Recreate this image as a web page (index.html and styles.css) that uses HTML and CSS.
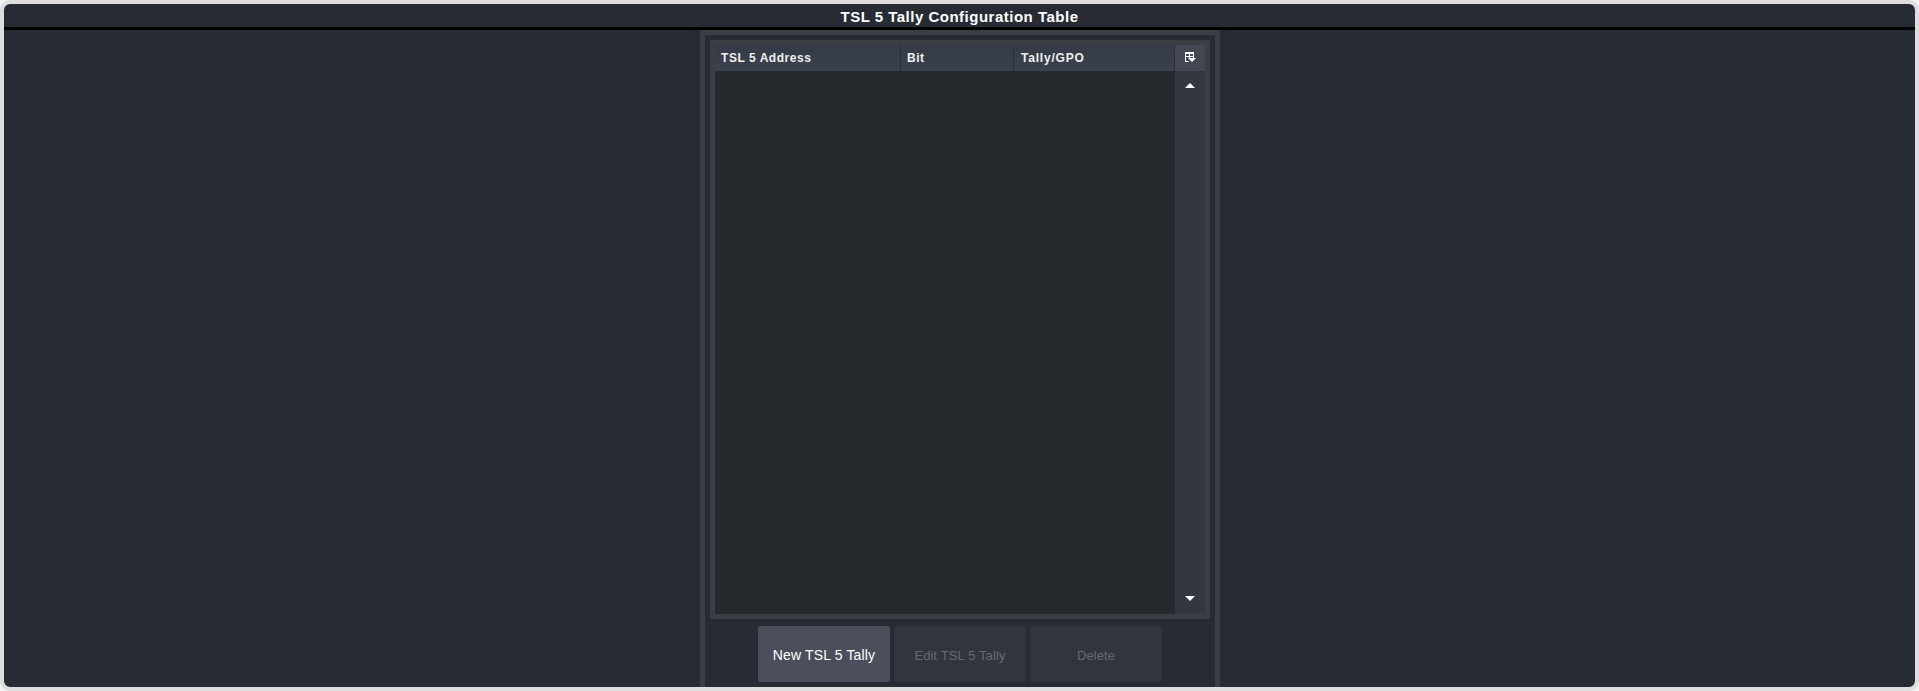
FILE: index.html
```html
<!DOCTYPE html>
<html lang="en">
<head>
  <meta charset="UTF-8">
  <title>TSL 5 Tally Configuration Table</title>
  <link rel="stylesheet" href="styles.css">
</head>
<body>
  <div class="frame">
    <header class="title">TSL 5 Tally Configuration Table</header>
    <main class="content">
      <section class="panel">
        <div class="table-box">
          <div class="table-head">
            <div class="col col-addr">TSL 5 Address</div>
            <div class="col col-bit">Bit</div>
            <div class="col col-tally">Tally/GPO</div>
            <div class="corner">
              <svg width="12" height="10" viewBox="0 0 12 10">
                <path d="M1.5 1h8M9.5 1v5M1.5 .5v9h3M1.5 4.5h8M5.5 1v5" fill="none" stroke="#fff" stroke-width="1"/>
                <path d="M1 0h9v2h-9z" fill="#fff"/>
                <path d="M4 6h8l-4 4z" fill="#fff"/>
              </svg>
            </div>
          </div>
          <div class="table-main">
            <div class="rows"></div>
            <div class="scrollbar">
              <span class="arrow arrow-up"></span>
              <span class="arrow arrow-down"></span>
            </div>
          </div>
        </div>
        <div class="actions">
          <button class="btn">New TSL 5 Tally</button>
          <button class="btn" disabled>Edit TSL 5 Tally</button>
          <button class="btn" disabled>Delete</button>
        </div>
      </section>
    </main>
  </div>
</body>
</html>
```

FILE: styles.css
```css
:root {
  --bg: #272c34;
  --line: #3b3f44;
  --body: #26292e;
  --head: #383f4a;
  --scroll: #33373f;
}
* {box-sizing:border-box;}
html, body {margin:0; height:100%; background:#f2f2f2;}
body {font-family:"Liberation Sans", Arial, sans-serif; color:#fff; overflow:hidden;}

.frame {
  height:691px; display:flex; flex-direction:column;
  background:var(--bg);
  border:4px solid #dedede; border-radius:10px;
  overflow:hidden;
}
.title {
  height:26px; flex:none;
  border-bottom:3px solid #000;
  display:flex; align-items:center; justify-content:center;
  font-size:15px; font-weight:bold; letter-spacing:.5px;
  padding-top:1px;
}
.content {flex:1; min-height:0; display:flex; justify-content:center; padding-left:1px;}

.panel {
  width:520px; display:flex; flex-direction:column;
  border:5px solid var(--line); border-bottom:0;
  padding:5px 5px 0;
}
.table-box {
  height:579px; flex:none; display:flex; flex-direction:column;
  border:5px solid var(--line);
}
.table-head {
  height:26px; flex:none; display:flex;
  background:linear-gradient(#343b46, #3b424d);
  font-size:12px; font-weight:bold; letter-spacing:.55px; color:#f0f0f0;
}
.col {display:flex; align-items:center; padding-left:6px; border-right:1px solid #2a2f38;}
.col-addr {width:186px;}
.col-bit {width:113px;}
.col-tally {width:161px; padding-left:7px; letter-spacing:.8px;}
.corner {
  width:30px; display:flex; align-items:center; justify-content:center;
  background:#424753;
  padding-bottom:2px;
}
.table-main {flex:1; min-height:0; display:flex;}
.rows {flex:1; background:var(--body);}
.scrollbar {
  width:30px; display:flex; flex-direction:column; align-items:center; justify-content:space-between;
  background:var(--scroll);
  padding:12px 0 13px;
}
.arrow {width:0; height:0; border-left:5px solid transparent; border-right:5px solid transparent;}
.arrow-up {border-bottom:5px solid #fff;}
.arrow-down {border-top:5px solid #fff;}

.actions {flex:1; display:flex; justify-content:center; gap:4px; padding:7px 0 5px;}
.btn {
  width:132px; height:56px; border:0; border-radius:3px;
  background:#4a4f5b; color:#fff;
  font-family:inherit; font-size:14px; letter-spacing:.15px;
  padding:2px 0 0;
}
.btn:disabled {background:#31363e; color:#666a70; font-size:13px; letter-spacing:.1px;}
```
